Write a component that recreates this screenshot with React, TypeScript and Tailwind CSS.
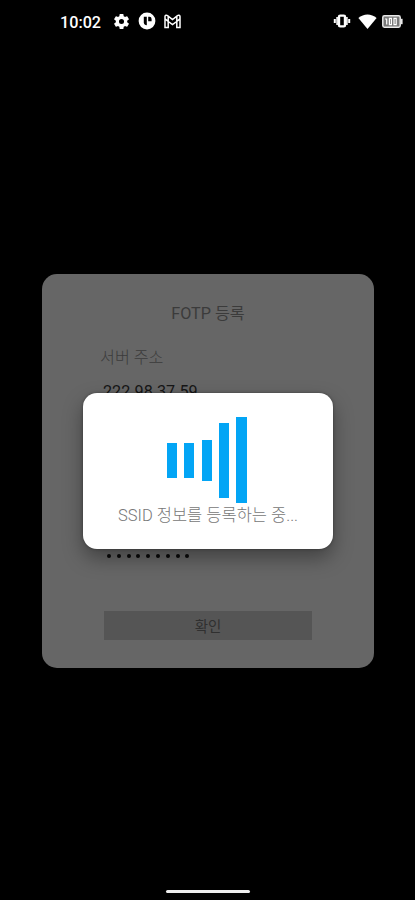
const BARS = [
  { id: "b1", className: "h-[35px] w-[10px]" },
  { id: "b2", className: "h-[35px] w-[10px]" },
  { id: "b3", className: "h-[41px] w-[10px]" },
  { id: "b4", className: "h-[75px] w-[10px]" },
  { id: "b5", className: "h-[86px] w-[11px]" },
];

function StatusBar() {
  return (
    <header className="flex h-[42px] shrink-0 items-center justify-between pr-3 pl-[60px] text-white">
      <div className="flex items-center">
        <span className="w-[52px] pt-[3px] text-[16.2px] leading-[39px] font-medium">10:02</span>
        <svg width="19" height="19" viewBox="0 0 24 24" fill="currentColor">
          <path d="M19.14 12.94a7.5 7.5 0 0 0 0-1.88l2.03-1.58a.5.5 0 0 0 .12-.61l-1.92-3.32a.5.5 0 0 0-.59-.22l-2.39.96a7 7 0 0 0-1.62-.94l-.36-2.54a.5.5 0 0 0-.48-.41h-3.84a.5.5 0 0 0-.47.41l-.36 2.54a7.4 7.4 0 0 0-1.62.94l-2.39-.96a.5.5 0 0 0-.59.22L2.74 8.87a.5.5 0 0 0 .12.61l2.03 1.58a7.5 7.5 0 0 0 0 1.88l-2.03 1.58a.5.5 0 0 0-.12.61l1.92 3.32c.12.22.37.29.59.22l2.39-.96c.5.38 1.03.7 1.62.94l.36 2.54c.05.24.24.41.48.41h3.84c.24 0 .44-.17.47-.41l.36-2.54a7.4 7.4 0 0 0 1.62-.94l2.39.96c.22.08.47 0 .59-.22l1.92-3.32a.5.5 0 0 0-.12-.61zM12 15.2a3.2 3.2 0 1 1 0-6.4 3.2 3.2 0 0 1 0 6.4z" />
        </svg>
        <svg className="ml-[7px]" width="18" height="18" viewBox="0 0 18 18">
          <circle cx="9" cy="9" r="8.4" fill="white" />
          <path d="M5.8 4.8h3v8.4c-1.8 0-3-1.3-3-3z" fill="black" />
          <path d="M10.2 4.8h1.2a2.2 2.2 0 0 1 2.2 2.2v2.2h-3.4z" fill="black" />
        </svg>
        <svg className="ml-2" width="17" height="15" viewBox="0 0 17 15" fill="none">
          <path
            d="M1 13.4V2.6C1 1.2 2.5.8 3.5 1.6l5 3.9 5-3.9c1-.8 2.5-.4 2.5 1v10.8h-3.2V7.4L8.5 10.6 4.2 7.4v6zM4.2 2.5v4.9L1 4.8M12.8 2.5v4.9L16 4.8"
            stroke="white"
            strokeWidth="1.5"
          />
        </svg>
      </div>

      <div className="flex items-center">
        <svg width="18" height="14" viewBox="0 0 18 14" fill="none" stroke="white">
          <rect x="6" y="1.6" width="6" height="10.8" rx="1.2" strokeWidth="2.4" />
          <path d="M4.1 3v8M13.9 3v8" strokeWidth="1.6" />
          <path d="M1.8 4.9v4.2M16.2 4.9v4.2" strokeWidth="2" />
        </svg>
        <svg className="ml-[7px]" width="19" height="15" viewBox="0 0 19 15">
          <path d="M9.5 15 .4 4.1C5.6-.6 13.4-.6 18.6 4.1z" fill="white" />
        </svg>
        <svg className="ml-[5px]" width="21" height="13" viewBox="0 0 21 13">
          <rect x="0.8" y="0.8" width="17.4" height="11.4" rx="1.6" fill="#777" stroke="#e8e8e8" strokeWidth="1.5" />
          <path d="M18.6 3.8h2v5.4h-2z" fill="#e8e8e8" />
          <path d="M3 4h1.7v5.6M7.4 3.4v6.2h2V3.4zM12 3.4v6.2h2.2V3.4z" fill="none" stroke="white" strokeWidth="1.2" />
        </svg>
      </div>
    </header>
  );
}

function LoadingDialog() {
  return (
    <div className="absolute top-[119px] left-[41px] flex h-[156px] w-[250px] flex-col items-center rounded-[14px] bg-white pt-6 shadow-[0_9px_20px_rgba(0,0,0,0.36),0_0_3px_rgba(0,0,0,0.35)]">
      <div className="mr-[2px] flex h-[86px] items-center gap-[7.3px]">
        {BARS.map((bar) => (
          <div key={bar.id} className={`bg-[#03a5f5] ${bar.className}`} />
        ))}
      </div>
      <p className="mt-[1px] text-[16.5px] leading-6 font-light whitespace-nowrap text-[#777]">
        SSID 정보를 등록하는 중...
      </p>
    </div>
  );
}

export default function App() {
  return (
    <div className="flex h-[900px] w-[415px] flex-col overflow-hidden bg-black font-[Roboto,'Noto_Sans_CJK_KR',sans-serif]">
      <StatusBar />

      <main className="relative mt-[232px] ml-[42px] flex h-[394px] w-[332px] shrink-0 flex-col rounded-[15px] bg-[#666] text-[#3b3b3b]">
        <h1 className="pt-7 text-center text-[16.2px] leading-6">FOTP 등록</h1>
        <div className="flex flex-col px-[58px] pt-5">
          <label className="text-[16.2px] leading-6 font-light">서버 주소</label>
          <span className="mt-[10px] pl-[3px] text-[16.2px] leading-6 text-[#161616]">222.98.37.59</span>
        </div>

        {/* Masked password */}
        <div className="mt-[150px] ml-[65px] flex gap-[5.8px]">
          {Array.from({ length: 9 }, (_, i) => (
            <span key={i} className="size-1 rounded-full bg-[#090909]" />
          ))}
        </div>

        <button className="mt-[53px] ml-[62px] h-[29px] w-[208px] bg-[#555] pt-[2px] text-[14.5px] leading-[29px] text-[#303030]">
          확인
        </button>

        <LoadingDialog />
      </main>

      {/* Home indicator */}
      <div className="mt-auto mb-[7px] h-[3px] w-[84px] self-center rounded-full bg-[#eee]" />
    </div>
  );
}
